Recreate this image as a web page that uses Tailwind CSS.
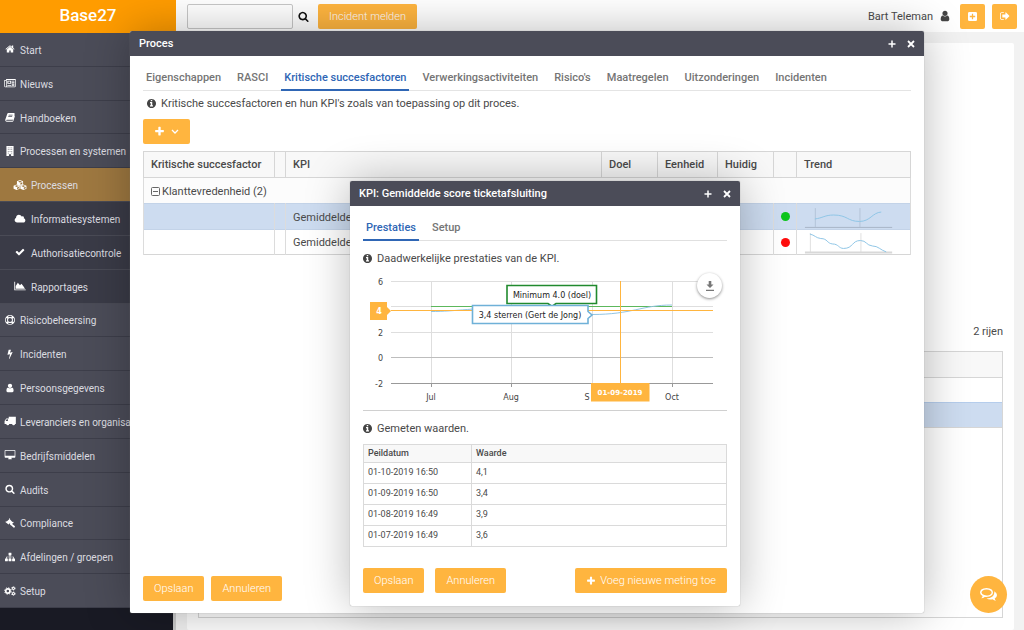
<!DOCTYPE html>
<html lang="nl">
<head>
<meta charset="utf-8">
<title>Base27</title>
<script src="https://cdn.jsdelivr.net/npm/@tailwindcss/browser@4"></script>
</head>
<body class="relative flex h-screen flex-col overflow-hidden bg-[#f2f2f2] font-[Roboto,sans-serif] text-[11px] text-[#4a4a4a]">

<svg class="hidden" aria-hidden="true">
  <symbol id="home" viewBox="0 0 1792 1792"><path d="M1472 992v480q0 26-19 45t-45 19h-384v-384h-256v384h-384q-26 0-45-19t-19-45v-480q0-1 .5-3t.5-3l575-474 575 474q1 2 1 6zm223-69l-62 74q-8 9-21 11h-3q-13 0-21-7l-692-577-692 577q-12 8-24 7-13-2-21-11l-62-74q-8-10-7-23.5t11-21.5l719-599q32-26 76-26t76 26l244 204v-195q0-14 9-23t23-9h192q14 0 23 9t9 23v408l219 182q10 8 11 21.5t-7 23.5z"/></symbol>
  <symbol id="news" viewBox="0 0 16 14"><path fill-rule="evenodd" d="M2.500 1.500H16V11.500q0 1.500-1.500 1.500H1.500Q0 13 0 11.500V2.800h2.500zM1 4v7.500q0 .6.600.6t.9-.6V4zM3.500 2.700V12h11q.5 0 .5-.5V2.700zM4.300 3.700h5.400v4.500H4.300zM5.700 5v2h2.600V5zM10.500 3.700h3.700v1.200h-3.700zM10.500 6h3.700v1.200h-3.700zM10.500 8.200h3.700v1.200h-3.700zM4.300 9.800h5.400V11H4.300zM10.500 10.200h3.700v1h-3.700z"/></symbol>
  <symbol id="book" viewBox="0 0 14 14"><path fill-rule="evenodd" d="M4.800 1.500h7.700q1.300.2 1 1.500l-2 7q-.3 1-1.300 1H2.500q-.9.100-.9.500.1.700 1 .7h8.200l2.400-7.500q.8.500.5 1.500l-2 6.300q-.3 1-1.300 1H2.300Q.6 13.300.3 11.700q0-.9.300-1.700L3 3q.4-1.500 1.800-1.500zM5.300 4l-.3.900h5.500l.3-.9zM4.700 6l-.3.900h5.500l.3-.9z"/></symbol>
  <symbol id="building" viewBox="0 0 12 14"><path fill-rule="evenodd" d="M1 0h10v14H7.500v-2.500h-3V14H1zM3 2v1h1V2zM5.500 2v1h1V2zM8 2v1h1V2zM3 4.500v1h1v-1zM5.500 4.500v1h1v-1zM8 4.500v1h1v-1zM3 7v1h1V7zM5.500 7v1h1V7zM8 7v1h1V7zM3 9.500v1h1v-1zM8 9.500v1h1v-1z"/></symbol>
  <symbol id="cubes" viewBox="0 0 18 14"><path fill-rule="evenodd" d="M9 0l4.300 1.800v4.500L9 8.200 4.700 6.300V1.800zM9 1.100L6.300 2.300 9 3.400l2.700-1.100zM9.600 4.300v2.500l2.600-1.100V3.200zM4.300 6.400l4.200 1.800v3.900L4.300 14 0 12.100V8.200zM4.300 7.400L1.600 8.500l2.700 1.200L7 8.500zM4.900 10.500v2.300l2.600-1.100V9.400zM13.700 6.400L18 8.200v3.900L13.700 14l-4.200-1.900V8.200zM13.700 7.400L11 8.500l2.700 1.200 2.700-1.200zM14.300 10.500v2.300l2.700-1.100V9.400z"/></symbol>
  <symbol id="cloud" viewBox="64 0 1920 1792"><path d="M1984 1152q0 159-112.500 271.500t-271.500 112.500h-1088q-185 0-316.500-131.500t-131.500-316.500q0-132 71-241.500t187-163.500q-2-28-2-43 0-212 150-362t362-150q158 0 286.500 88t187.500 230q70-62 166-62 106 0 181 75t75 181q0 75-41 138 129 30 213 134.500t84 239.500z"/></symbol>
  <symbol id="check" viewBox="0 0 1792 1792"><path d="M1671 566q0 40-28 68l-724 724-136 136q-28 28-68 28t-68-28l-136-136-362-362q-28-28-28-68t28-68l136-136q28-28 68-28t68 28l294 295 656-657q28-28 68-28t68 28l136 136q28 28 28 68z"/></symbol>
  <symbol id="area" viewBox="0 0 16 14"><path d="M0 1h1.200v10.800H16V13H0zM2 11V7l3-4.500L8 6l2-2 2.500 3L15 11z"/></symbol>
  <symbol id="ring" viewBox="0 0 14 14"><path fill-rule="evenodd" d="M7 0a7 7 0 1 1 0 14A7 7 0 0 1 7 0zM7 4.200a2.800 2.800 0 1 0 0 5.600 2.800 2.800 0 0 0 0-5.600zM4.700 1.500v1.800Q5.800 2.900 7 2.900t2.300.4V1.500Q7 .6 4.700 1.500zM4.700 12.500q2.300.9 4.600 0v-1.800q-1.100.4-2.300.4t-2.300-.4zM1.500 4.700q-.9 2.300 0 4.600h1.800Q2.900 8.200 2.900 7t.4-2.300zM12.500 4.700h-1.800q.4 1.100.4 2.300t-.4 2.300h1.800q.9-2.300 0-4.600z"/></symbol>
  <symbol id="bolt" viewBox="0 0 1792 1792"><path d="M1333 566q18 20 7 44l-540 1157q-13 25-42 25-4 0-14-2-17-5-25.500-19t-4.500-30l197-808-406 101q-4 1-12 1-18 0-31-11-18-15-13-39l201-825q4-14 16-23t28-9h328q19 0 32 12.500t13 29.500q0 8-5 18l-171 463 396-98q8-2 12-2 19 0 34 15z"/></symbol>
  <symbol id="user" viewBox="0 0 1792 1792"><path d="M1536 1399q0 109-62.500 187t-150.500 78h-854q-88 0-150.500-78t-62.500-187q0-85 8.500-160.500t31.500-152 58.500-131 94-89 134.500-34.500q131 128 313 128t313-128q76 0 134.500 34.500t94 89 58.500 131 31.500 152 8.500 160.500zm-256-887q0 159-112.500 271.500t-271.500 112.500-271.500-112.500-112.500-271.500 112.500-271.500 271.500-112.500 271.500 112.500 112.500 271.500z"/></symbol>
  <symbol id="truck" viewBox="0 0 14 12"><path fill-rule="evenodd" d="M5.500 1H14v8.500h-1a1.700 1.700 0 0 1-3.400 0H6a1.700 1.700 0 0 1-3.400 0H.500V6L2.500 3h3zM4.500 4H3L1.700 6h2.800z"/></symbol>
  <symbol id="desktop" viewBox="-64 0 1920 1792"><path d="M1728 992v-832q0-13-9.500-22.500t-22.500-9.500h-1600q-13 0-22.500 9.500t-9.500 22.500v832q0 13 9.500 22.500t22.500 9.500h1600q13 0 22.500-9.500t9.500-22.500zm128-832v1088q0 66-47 113t-113 47h-544q0 37 16 77.500t32 71 16 43.500q0 26-19 45t-45 19h-512q-26 0-45-19t-19-45q0-14 16-44t32-70 16-78h-544q-66 0-113-47t-47-113v-1088q0-66 47-113t113-47h1600q66 0 113 47t47 113z"/></symbol>
  <symbol id="search" viewBox="0 0 1792 1792"><path d="M1216 832q0-185-131.500-316.500t-316.500-131.500-316.500 131.500-131.500 316.500 131.500 316.500 316.500 131.500 316.500-131.500 131.500-316.500zm512 832q0 52-38 90t-90 38q-54 0-90-38l-343-342q-179 124-399 124-143 0-273.500-55.500t-225-150-150-225-55.500-273.500 55.500-273.500 150-225 225-150 273.500-55.500 273.500 55.500 225 150 150 225 55.500 273.500q0 220-124 399l343 343q37 37 37 90z"/></symbol>
  <symbol id="gavel" viewBox="0 0 14 14"><path d="M6 0l1.200 1-.4.9 3.600 3.600.9-.4 1 1L8.100 10.300 7 9.300l.4-1-.9-.9L5 9 .5 5.500l1-1 .9.300L6 1.900zM9.600 8l4 3.300q.8.900 0 1.700t-1.700.3L8 9.800z"/></symbol>
  <symbol id="sitemap" viewBox="0 0 1792 1792"><path d="M1792 1248v320q0 40-28 68t-68 28h-320q-40 0-68-28t-28-68v-320q0-40 28-68t68-28h96v-192h-512v192h96q40 0 68 28t28 68v320q0 40-28 68t-68 28h-320q-40 0-68-28t-28-68v-320q0-40 28-68t68-28h96v-192h-512v192h96q40 0 68 28t28 68v320q0 40-28 68t-68 28h-320q-40 0-68-28t-28-68v-320q0-40 28-68t68-28h96v-192q0-52 38-90t90-38h512v-192h-96q-40 0-68-28t-28-68v-320q0-40 28-68t68-28h320q40 0 68 28t28 68v320q0 40-28 68t-68 28h-96v192h512q52 0 90 38t38 90v192h96q40 0 68 28t28 68z"/></symbol>
  <symbol id="cogs" viewBox="0 0 16 14"><g fill="none" stroke="#fff"><circle cx="5" cy="7" r="3" stroke-width="2.400"/><circle cx="5" cy="7" r="4.600" stroke-width="1.200" stroke-dasharray="1.800 1.810"/><circle cx="12.700" cy="3.300" r="1.600" stroke-width="1.500"/><circle cx="12.700" cy="3.300" r="2.700" stroke-width=".9" stroke-dasharray="1.400 1.430"/><circle cx="12.700" cy="10.700" r="1.600" stroke-width="1.500"/><circle cx="12.700" cy="10.700" r="2.700" stroke-width=".9" stroke-dasharray="1.400 1.430"/></g></symbol>
  <symbol id="plus" viewBox="0 0 1792 1792"><path d="M1600 736v192q0 40-28 68t-68 28h-416v416q0 40-28 68t-68 28h-192q-40 0-68-28t-28-68v-416h-416q-40 0-68-28t-28-68v-192q0-40 28-68t68-28h416v-416q0-40 28-68t68-28h192q40 0 68 28t28 68v416h416q40 0 68 28t28 68z"/></symbol>
  <symbol id="info" viewBox="128 128 1536 1536"><path d="M1152 1376v-160q0-14-9-23t-23-9h-96v-512q0-14-9-23t-23-9h-320q-14 0-23 9t-9 23v160q0 14 9 23t23 9h96v320h-96q-14 0-23 9t-9 23v160q0 14 9 23t23 9h448q14 0 23-9t9-23zm-128-896v-160q0-14-9-23t-23-9h-192q-14 0-23 9t-9 23v160q0 14 9 23t23 9h192q14 0 23-9t9-23zm640 416q0 209-103 385.500t-279.500 279.500-385.500 103-385.500-103-279.500-279.500-103-385.500 103-385.500 279.500-279.500 385.500-103 385.500 103 279.500 279.500 103 385.500z"/></symbol>
  <symbol id="plussq" viewBox="0 0 10 10"><path fill-rule="evenodd" d="M1.500 0h7Q10 0 10 1.500v7Q10 10 8.500 10h-7Q0 10 0 8.500v-7Q0 0 1.500 0zM4.300 2v2.300H2v1.400h2.300V8h1.400V5.700H8V4.300H5.700V2z"/></symbol>
  <symbol id="signout" viewBox="64 128 1664 1536"><path d="M704 1440q0 4 1 20t.5 26.500-3 23.500-10 19.500-20.500 6.500h-320q-119 0-203.500-84.500t-84.500-203.500v-704q0-119 84.500-203.500t203.500-84.500h320q13 0 22.500 9.500t9.500 22.500q0 4 1 20t.5 26.500-3 23.500-10 19.500-20.500 6.500h-320q-66 0-113 47t-47 113v704q0 66 47 113t113 47h312l11.500 1 11.500 3 8 5.500 7 9 2 13.500zm928-544q0 26-19 45l-544 544q-19 19-45 19t-45-19-19-45v-288h-448q-26 0-45-19t-19-45v-384q0-26 19-45t45-19h448v-288q0-26 19-45t45-19 45 19l544 544q19 19 19 45z"/></symbol>
  <symbol id="wplus" viewBox="0 0 8 8"><path d="M4 .5v7M.5 4h7" stroke="#fff" stroke-width="1.500"/></symbol>
  <symbol id="wclose" viewBox="0 0 8 8"><path d="M1 1l6 6M7 1L1 7" stroke="#fff" stroke-width="1.800"/></symbol>
</svg>

<header class="flex h-[33px] shrink-0 items-center border-b border-[#f2f2f2] bg-white pr-[7px]">
  <div class="flex h-[33px] w-[176px] shrink-0 items-center justify-center bg-[#ff9c00] text-[17px] font-medium text-white">Base27</div>
  <input aria-label="Zoeken" class="ml-[11px] h-[25px] w-[106px] rounded-xs border border-[#c8c8c8] bg-white px-1">
  <button aria-label="Zoek" class="ml-[5px] text-[#111]"><svg class="size-[11px] fill-current"><use href="#search"/></svg></button>
  <button class="ml-[9px] h-[25px] rounded-xs bg-[#ffb53f] px-[11px] pt-[2px] font-light text-white">Incident melden</button>
  <span class="ml-auto pt-[2px]">Bart Teleman</span>
  <svg class="ml-[6px] size-[12px] fill-[#444]"><use href="#user"/></svg>
  <button aria-label="Nieuw" class="ml-[9px] flex size-[25px] items-center justify-center rounded-xs bg-[#ffb53f] text-white"><svg class="size-[9px] fill-current"><use href="#plussq"/></svg></button>
  <button aria-label="Uitloggen" class="ml-[7px] flex size-[25px] items-center justify-center rounded-xs bg-[#ffb53f] text-white"><svg class="size-[10px] fill-current"><use href="#signout"/></svg></button>
</header>

<div class="flex min-h-0 flex-1">
  <nav class="w-[176px] shrink-0 border-r-3 border-[#ccc] bg-[#191a24] text-[10px] text-[#dcdce0]">
    <ul class="grid h-[575px] auto-rows-fr bg-[#4b4c58] whitespace-nowrap [&_a]:flex [&_a]:h-full [&_a]:items-center [&_a]:gap-1 [&_a]:overflow-hidden [&_a]:border-b [&_a]:border-[#3d3e4a] [&_a]:pt-[2px] [&_a]:pl-1 [&_svg]:mb-[2px] [&_svg]:h-[10px] [&_svg]:w-[12px] [&_svg]:shrink-0 [&_svg]:fill-white">
      <li><a href="#"><svg><use href="#home"/></svg>Start</a></li>
      <li><a href="#"><svg><use href="#news"/></svg>Nieuws</a></li>
      <li><a href="#"><svg><use href="#book"/></svg>Handboeken</a></li>
      <li><a href="#"><svg><use href="#building"/></svg>Processen en systemen</a></li>
      <li class="row-span-4 bg-[#3a3b47]">
        <ul class="grid h-full auto-rows-fr [&_a]:border-[#4a4b56] [&_a]:pl-[13px] [&_svg]:w-[14px]">
          <li class="bg-[#9e7840]"><a href="#"><svg><use href="#cubes"/></svg>Processen</a></li>
          <li><a href="#"><svg><use href="#cloud"/></svg>Informatiesystemen</a></li>
          <li><a href="#"><svg><use href="#check"/></svg>Authorisatiecontrole</a></li>
          <li><a href="#"><svg><use href="#area"/></svg>Rapportages</a></li>
        </ul>
      </li>
      <li><a href="#"><svg><use href="#ring"/></svg>Risicobeheersing</a></li>
      <li><a href="#"><svg><use href="#bolt"/></svg>Incidenten</a></li>
      <li><a href="#"><svg><use href="#user"/></svg>Persoonsgegevens</a></li>
      <li><a href="#"><svg><use href="#truck"/></svg>Leveranciers en organisaties</a></li>
      <li><a href="#"><svg><use href="#desktop"/></svg>Bedrijfsmiddelen</a></li>
      <li><a href="#"><svg><use href="#search"/></svg>Audits</a></li>
      <li><a href="#"><svg><use href="#gavel"/></svg>Compliance</a></li>
      <li><a href="#"><svg><use href="#sitemap"/></svg>Afdelingen / groepen</a></li>
      <li><a href="#"><svg><use href="#cogs"/></svg>Setup</a></li>
    </ul>
  </nav>
  <main class="mt-[10px] mr-[10px] ml-[11px] flex-1 rounded-xs bg-white px-[11px] pt-[281px]">
    <p class="text-right leading-4">2 rijen</p>
    <div class="mt-[11px] h-[267px] border border-[#d6d6d6]">
      <div class="h-[26px] border-b border-[#d6d6d6] bg-[#f8f8f8]"></div>
      <div class="h-[24px]"></div>
      <div class="h-[26px] border-y border-t-[#b5cdec] border-b-[#d6d6d6] bg-[#cddcf0]"></div>
    </div>
  </main>
</div>

<section role="dialog" aria-labelledby="t1" class="absolute top-[31px] right-[100px] bottom-[17px] left-[130px] flex flex-col overflow-hidden rounded-xs bg-white shadow-[0_0_1px_#888,0_0_45px_rgba(0,0,0,0.28)]">
  <header class="flex h-[25px] shrink-0 items-center bg-[#4b4c58] px-[9px] text-white">
    <h1 id="t1" class="pt-[2px] font-medium">Proces</h1>
    <button aria-label="Maximaliseren" class="ml-auto"><svg class="size-2"><use href="#wplus"/></svg></button>
    <button aria-label="Sluiten" class="ml-[11px]"><svg class="size-2"><use href="#wclose"/></svg></button>
  </header>
  <div class="flex flex-1 flex-col px-[13px] pb-[12px]">
    <div role="tablist" class="mt-[7px] flex h-[28px] gap-[10px] border-b border-[#e4e4e4] font-medium text-[#757575] [&_button]:h-[28px] [&_button]:px-[3px] [&_button]:pt-[2px]">
      <button role="tab">Eigenschappen</button>
      <button role="tab">RASCI</button>
      <button role="tab" aria-selected="true" class="border-b-2 border-[#2f66b5] !pt-[4px] text-[#2f66b5]">Kritische succesfactoren</button>
      <button role="tab">Verwerkingsactiviteiten</button>
      <button role="tab">Risico's</button>
      <button role="tab">Maatregelen</button>
      <button role="tab">Uitzonderingen</button>
      <button role="tab">Incidenten</button>
    </div>
    <p class="mt-[5px] flex items-center gap-[5px] pl-1 leading-4"><svg class="mb-[2px] size-[9px] fill-[#444]"><use href="#info"/></svg>Kritische succesfactoren en hun KPI's zoals van toepassing op dit proces.</p>
    <button aria-label="Toevoegen" class="mt-[7px] flex h-[25px] w-[47px] shrink-0 items-center justify-center gap-[6px] rounded-xs bg-[#ffb53f] text-white"><svg class="size-[11px] fill-current"><use href="#plus"/></svg><svg class="h-[5px] w-[8px]" viewBox="0 0 8 5"><path d="M1 1l3 3 3-3" fill="none" stroke="currentColor" stroke-width="1.300"/></svg></button>
    <table class="mt-[7px] w-full table-fixed border-collapse border border-[#d6d6d6] text-left [&_td]:border-x [&_td]:border-[#dcdcdc] [&_td]:px-[7px] [&_td]:pt-[3px] [&_th]:border [&_th]:border-[#d6d6d6] [&_th]:px-[7px] [&_th]:pt-[2px] [&_th]:font-medium">
      <colgroup><col class="w-[131px]"><col class="w-[11px]"><col><col class="w-[56px]"><col class="w-[60px]"><col class="w-[56px]"><col class="w-[23px]"><col class="w-[114px]"></colgroup>
      <thead><tr class="h-[26px] bg-[#f8f8f8]"><th>Kritische succesfactor</th><th></th><th>KPI</th><th>Doel</th><th>Eenheid</th><th>Huidig</th><th></th><th>Trend</th></tr></thead>
      <tbody>
        <tr class="h-[26px] bg-[#fcfcfc]"><td colspan="8"><span class="flex items-center gap-[2px]"><svg class="mb-[2px] size-[9px]" viewBox="0 0 9 9"><path d="M.5 1.500q0-1 1-1h6q1 0 1 1v6q0 1-1 1h-6q-1 0-1-1zM2 4.500h5" fill="none" stroke="#666"/></svg>Klanttevredenheid (2)</span></td></tr>
        <tr class="h-[26px] border-y border-y-[#c3d3e8] bg-[#cddcf0]"><td></td><td></td><td>Gemiddelde</td><td></td><td></td><td></td><td class="!pt-0"><span class="block size-[9px] rounded-full bg-[#0cc51c]"></span></td>
          <td class="!p-0"><svg class="block h-[24px] w-full" viewBox="797 204 114 24" fill="none"><path d="M815.500 207v19M860.500 207v19" stroke="#b3c3d8"/><path d="M805 226.500h88" stroke="#a9b5c6"/><path d="M815 218c8-1 10-4 19-4 14 0 14 6.500 26 6.500 11 0 13-9 22-9.500" stroke="#8fc5e6"/></svg></td></tr>
        <tr class="h-[25px]"><td></td><td></td><td>Gemiddelde</td><td></td><td></td><td></td><td class="!pt-0"><span class="block size-[9px] rounded-full bg-[#ff0d0d]"></span></td>
          <td class="!p-0"><svg class="block h-[24px] w-full" viewBox="797 230 114 24" fill="none"><path d="M810.500 233v20M861.500 233v20" stroke="#e0e0e0"/><path d="M805 252.500h88" stroke="#d8d8d8" stroke-width="2"/><path d="M810 234c5 1 6 4 11 4.500 7 0 6 5 12 5.500 6 0 6 4.500 11 4.500 10 0 8-8 17-8 6 0 6 5 12 5.500 6 0 8 4 14 6" stroke="#8fc5e6"/></svg></td></tr>
      </tbody>
    </table>
    <div class="mt-auto flex gap-[7px] font-light text-white [&_button]:h-[25px] [&_button]:rounded-xs [&_button]:bg-[#ffb53f] [&_button]:px-[11px] [&_button]:pt-[2px]"><button>Opslaan</button><button>Annuleren</button></div>
  </div>
</section>

<section role="dialog" aria-labelledby="t2" class="absolute top-[181px] left-[350px] w-[390px] overflow-hidden rounded-xs bg-white pb-[13px] shadow-[0_0_1px_#888,0_0_45px_rgba(0,0,0,0.28)]">
  <header class="flex h-[25px] items-center bg-[#4b4c58] px-[9px] text-white">
    <h2 id="t2" class="pt-[2px] font-medium">KPI: Gemiddelde score ticketafsluiting</h2>
    <button aria-label="Maximaliseren" class="ml-auto"><svg class="size-2"><use href="#wplus"/></svg></button>
    <button aria-label="Sluiten" class="ml-[11px]"><svg class="size-2"><use href="#wclose"/></svg></button>
  </header>
  <div class="px-[13px]">
    <div role="tablist" class="mt-[7px] flex h-[28px] gap-[10px] border-b border-[#e0e0e0] font-medium text-[#757575] [&_button]:h-[28px] [&_button]:px-[3px] [&_button]:pt-[2px]">
      <button role="tab" aria-selected="true" class="border-b-2 border-[#2f66b5] !pt-[4px] text-[#2f66b5]">Prestaties</button>
      <button role="tab">Setup</button>
    </div>
    <p class="mt-[10px] flex items-center gap-[5px] leading-4"><svg class="mb-[2px] size-[9px] fill-[#444]"><use href="#info"/></svg>Daadwerkelijke prestaties van de KPI.</p>
    <div class="relative mt-[3px] border-b border-[#d0d0d0]">
      <svg class="block w-full font-['DejaVu_Sans',sans-serif] text-[8px]" viewBox="363 270 364 140" fill="none">
        <path d="M391 281.500h322M391 306.500h322M391 332.500h322M431.500 281v106M511.500 281v106M592.500 281v106M672.500 281v106" stroke="#dedede"/>
        <path d="M391 357.500h322" stroke="#bdbdbd"/>
        <path d="M391 383.500h322M431.500 384v3M511.500 384v3M592.500 384v3M672.500 384v3" stroke="#999"/>
        <path d="M431 306.500h241" stroke="#5cb85c"/>
        <path d="M431 311.500c25 0 45-4 80-4 40 0 50 7 81 7 40 0 50-9.500 80-9.500" stroke="#93c5e3"/>
        <path d="M391 310.500h322M620.500 281v103" stroke="#ffb53f"/>
        <g fill="#444">
          <g text-anchor="end"><text x="383" y="285">6</text><text x="383" y="336">2</text><text x="383" y="361">0</text><text x="383" y="387">-2</text></g>
          <g text-anchor="middle"><text x="431" y="400">Jul</text><text x="511" y="400">Aug</text><text x="587" y="400">S</text><text x="672" y="400">Oct</text></g>
        </g>
        <path d="M507 285.500h89.500v18H556l-4 3-4-3h-41z" fill="#fff" stroke="#218a2e" stroke-width="1.600"/>
        <text x="552" y="298" text-anchor="middle" fill="#222">Minimum 4.0 (doel)</text>
        <path d="M472.500 305.500h115.500v6l4 3.500-4 3.500v5H472.500z" fill="#fff" stroke="#6fb1d8" stroke-width="1.600"/>
        <text x="530" y="318" text-anchor="middle" fill="#222">3,4 sterren (Gert de Jong)</text>
        <path d="M370 302h17v5l4 4-4 4v5h-17zM591 383h58.500v18.500H591z" fill="#ffb53f"/>
        <g fill="#fff" text-anchor="middle" font-weight="bold"><text x="379" y="314">4</text><text x="620" y="395" class="text-[7px]">01-09-2019</text></g>
      </svg>
      <button aria-label="Downloaden" class="absolute top-[3px] right-[5px] flex size-[25px] items-center justify-center rounded-full bg-white shadow-[0_1px_3px_rgba(0,0,0,0.45)]"><svg class="size-[10px] fill-[#777]" viewBox="0 0 10 10"><path d="M3.700 0h2.600v3.500h2.200L5 7 1.500 3.500h2.200zM1 8.700h8V10H1z"/></svg></button>
    </div>
    <p class="mt-[10px] flex items-center gap-[5px] leading-4"><svg class="mb-[2px] size-[9px] fill-[#444]"><use href="#info"/></svg>Gemeten waarden.</p>
    <table class="mt-[7px] w-full border-collapse border border-[#dadada] text-left text-[9px] [&_td]:h-[21px] [&_td]:border [&_td]:border-[#dadada] [&_td]:px-[4px] [&_th]:border [&_th]:border-[#dadada] [&_th]:px-[4px] [&_th]:font-medium">
      <thead><tr class="h-[18px] bg-[#f8f8f8]"><th class="w-[108px]">Peildatum</th><th>Waarde</th></tr></thead>
      <tbody>
        <tr><td>01-10-2019 16:50</td><td>4,1</td></tr>
        <tr><td>01-09-2019 16:50</td><td>3,4</td></tr>
        <tr><td>01-08-2019 16:49</td><td>3,9</td></tr>
        <tr><td>01-07-2019 16:49</td><td>3,6</td></tr>
      </tbody>
    </table>
    <div class="mt-[21px] flex font-light text-white [&_button]:h-[25px] [&_button]:rounded-xs [&_button]:bg-[#ffb53f] [&_button]:px-[11px] [&_button]:pt-[2px]">
      <button>Opslaan</button><button class="ml-[11px]">Annuleren</button>
      <button class="ml-auto flex items-center gap-1"><svg class="mb-[2px] size-[10px] fill-current"><use href="#plus"/></svg>Voeg nieuwe meting toe</button>
    </div>
  </div>
</section>

<button aria-label="Chat" class="absolute right-[17px] bottom-[17px] flex size-[37px] items-center justify-center rounded-full bg-[#ffb53f]"><svg class="h-[13px] w-[17px]" viewBox="0 0 17 13"><path fill-rule="evenodd" fill="#fff" d="M6.500 0Q13 .4 13 4.600 13 8.500 6.500 9q-1 0-1.800-.1Q3.300 10.100 1.200 10.200 2.500 9.300 2.600 8 0 6.800 0 4.600 0 .4 6.500 0zM6.500 1.400Q1.500 1.700 1.500 4.600 1.700 6.300 4.200 7.100 6 7.700 8 7.400q3.600-.7 3.600-2.900Q11.300 1.700 6.500 1.400zM14.100 3.200Q17 4.800 17 7.100 17 9.200 14.700 10.600q.2 1.300 1.300 2.200-2-.1-3.500-1.500-3.700.7-6-.9 7.500-.3 7.800-5.600.1-.8-.2-1.600z"/></svg></button>

</body>
</html>
